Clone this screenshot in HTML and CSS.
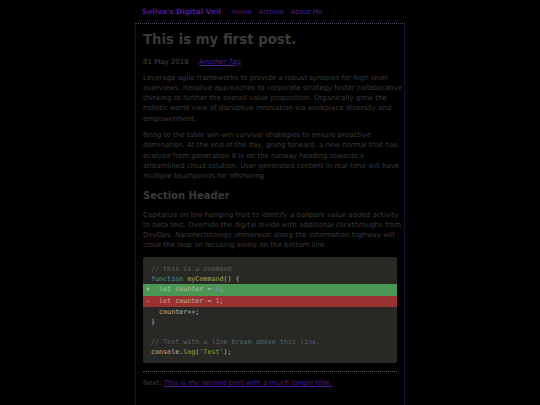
FILE: index.html
```html
<!DOCTYPE html>
<html lang="en">
<head>
<meta charset="utf-8">
<title>This is my first post.</title>
<link rel="stylesheet" href="styles.css">
</head>
<body>
<div class="wrap">
  <header class="site-header">
    <a class="site-title" href="#">Soliva's Digital Veil</a>
    <nav class="nav">
      <a href="#">Home</a>
      <a href="#">Archive</a>
      <a href="#">About Me</a>
    </nav>
  </header>
  <main class="main">
    <h1 class="post-title">This is my first post.</h1>
    <div class="meta"><span class="date">01 May 2018</span><a class="tag" href="#">Another Tag</a></div>
    <p>Leverage agile frameworks to provide a robust synopsis for high level overviews. Iterative approaches to corporate strategy foster collaborative thinking to further the overall value proposition. Organically grow the holistic world view of disruptive innovation via workplace diversity and empowerment.</p>
    <p>Bring to the table win-win survival strategies to ensure proactive domination. At the end of the day, going forward, a new normal that has evolved from generation X is on the runway heading towards a streamlined cloud solution. User generated content in real-time will have multiple touchpoints for offshoring.</p>
    <h2 class="section">Section Header</h2>
    <p>Capitalize on low hanging fruit to identify a ballpark value added activity to beta test. Override the digital divide with additional clickthroughs from DevOps. Nanotechnology immersion along the information highway will close the loop on focusing solely on the bottom line.</p>
    <pre class="code"><code><span class="ln"><span class="c">// this is a command</span></span><span class="ln"><span class="k">function</span> <span class="f">myCommand</span>() {</span><span class="ln add"><span class="mk">+</span>  <span class="k2">let</span> counter = <span class="n">0</span>;</span><span class="ln del"><span class="mk">-</span>  <span class="k2">let</span> counter = <span class="n">1</span>;</span><span class="ln">  counter++;</span><span class="ln">}</span><span class="ln"> </span><span class="ln"><span class="c">// Test with a line break above this line.</span></span><span class="ln">console.<span class="f">log</span>(<span class="s">'Test'</span>);</span></code></pre>
    <div class="next">Next: <a href="#">This is my second post with a much longer title.</a></div>
  </main>
</div>
</body>
</html>
```

FILE: styles.css
```css
html, body {
  margin: 0;
  padding: 0;
  background: #000;
}
body {
  font-family: "DejaVu Sans", Verdana, sans-serif;
  font-size: 7px;
  color: #3a3a3a;
}
a {
  color: #4c1d92;
}
.wrap {
  width: 270px;
  margin: 0 auto;
}
.site-header {
  height: 23px;
  display: flex;
  align-items: center;
  padding: 0 7px;
  border-bottom: 1px dotted #4a4258;
}
.site-title {
  font-weight: bold;
  font-size: 7.3px;
  text-decoration: none;
  color: #4c1a95;
  margin-right: 11px;
}
.nav {
  display: flex;
  gap: 7px;
}
.nav a {
  text-decoration: none;
  color: #4a1f8c;
  font-size: 6.7px;
}
.main {
  border-left: 1px solid #1d1030;
  border-right: 1px solid #1d1030;
  padding: 7.5px 1px 10px 7px;
  min-height: 363px;
}
.post-title {
  margin: 0;
  font-size: 13.3px;
  line-height: 16px;
  color: #3a3a3a;
}
.meta {
  margin-top: 9px;
  line-height: 10px;
  color: #454545;
}
.tag {
  margin-left: 10px;
  font-style: italic;
  color: #4c1d92;
}
p {
  margin: 6.7px 0 6.5px;
  line-height: 10.1px;
}
.section {
  margin: 7.7px 0 7px;
  font-size: 10px;
  line-height: 14px;
  color: #3a3a3a;
}
.code {
  margin: 7.2px 6px 0 0;
  padding: 7px 0 5.5px;
  background: #282824;
  border-radius: 2px;
  font-family: "DejaVu Sans Mono", monospace;
  font-size: 6.7px;
  color: #b8b8b0;
}
.code code {
  font-family: inherit;
}
.ln {
  display: block;
  position: relative;
  line-height: 10px;
  padding-left: 8px;
  white-space: pre;
}
.add, .del {
  line-height: 11.5px;
}
.add {
  background: #4a9854;
}
.del {
  background: #9a3131;
}
.mk {
  position: absolute;
  left: 3px;
  color: #d8d8d0;
}
.c { color: #5c6268; }
.k { color: #4193a8; }
.k2 { color: #8fd0a0; }
.del .k2 { color: #d89a9a; }
.f { color: #aea654; }
.s { color: #84a830; }
.n { color: #9a80d0; }
.del .n { color: #c888c8; }
.next {
  margin: 8px 6px 0 0;
  border-top: 1px dotted #555;
  padding-top: 6.5px;
  line-height: 10px;
  color: #3a3a3a;
}
.next a {
  color: #4c1d92;
}
```
